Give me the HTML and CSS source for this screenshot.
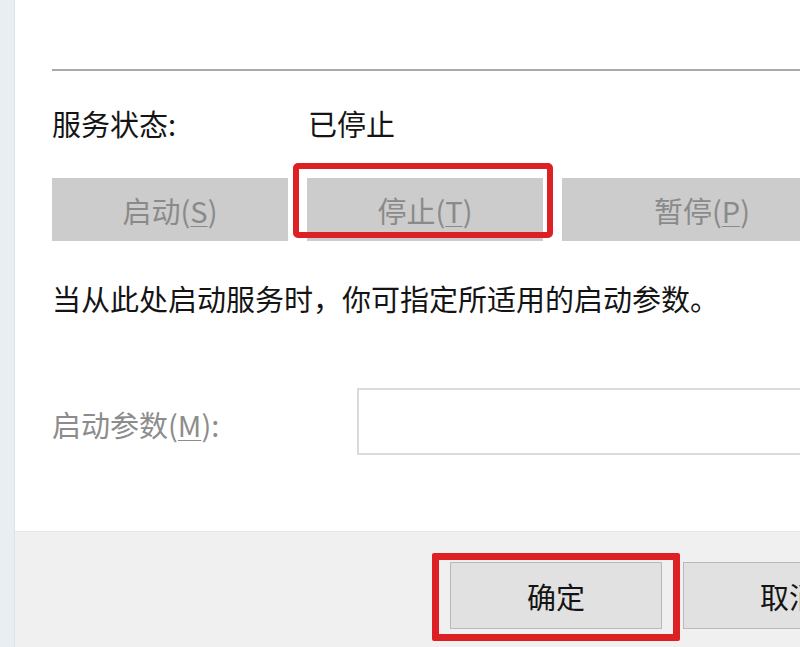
FILE: index.html
```html
<!DOCTYPE html>
<html lang="zh-CN">
<head>
<meta charset="utf-8">
<title>服务属性</title>
<link rel="stylesheet" href="styles.css">
</head>
<body>
<div class="frame">
  <div class="panel">
    <div class="separator"></div>
    <div class="status-row">
      <span class="status-label">服务状态:</span>
      <span class="status-value">已停止</span>
    </div>
    <div class="btn-row">
      <div class="svc-btn">启动(<u>S</u>)</div>
      <div class="svc-btn highlighted">停止(<u>T</u>)<span class="mark mark-stop"></span></div>
      <div class="svc-btn wide">暂停(<u>P</u>)</div>
    </div>
    <div class="desc">当从此处启动服务时，你可指定所适用的启动参数。</div>
    <div class="param-row">
      <span class="param-label">启动参数(<u>M</u>):</span>
      <div class="param-input"></div>
    </div>
  </div>
  <div class="footer">
    <div class="dlg-btn highlighted">确定<span class="mark mark-ok"></span></div>
    <div class="dlg-btn">取消</div>
  </div>
</div>
</body>
</html>
```
FILE: styles.css
```css
html, body {
  margin: 0;
  padding: 0;
  width: 800px;
  height: 647px;
  overflow: hidden;
}
body {
  background: #e8eef2;
  font-family: "Noto Sans CJK SC", "Noto Sans", sans-serif;
  font-size: 29px;
  color: #141414;
  display: flex;
}
.frame {
  margin-left: 14px;
  border-left: 1px solid #dde3e7;
  width: 900px;
  flex: none;
  display: flex;
  flex-direction: column;
  background: #f0f0f0;
}
.panel {
  height: 532px;
  background: #ffffff;
  border-bottom: 1px solid #e6e6e6;
  padding-left: 37px;
  display: flex;
  flex-direction: column;
  box-sizing: border-box;
}
.separator {
  margin-top: 69px;
  height: 2px;
  background: #aaaaaa;
}
.status-row {
  margin-top: 32px;
  height: 40px;
  line-height: 40px;
  display: flex;
}
.status-label {
  width: 256px;
  flex: none;
}
.btn-row {
  margin-top: 35px;
  display: flex;
  gap: 19px;
}
.svc-btn {
  position: relative;
  width: 236px;
  height: 63px;
  flex: none;
  background: #cccccc;
  color: #8a8a8a;
  display: flex;
  align-items: center;
  justify-content: center;
}
.svc-btn.wide {
  width: 280px;
}
.svc-btn u, .param-label u {
  text-underline-offset: 3px;
  text-decoration-thickness: 1px;
}
.mark {
  position: absolute;
  border: 6px solid #dc2024;
  border-radius: 5px;
  box-sizing: border-box;
  pointer-events: none;
}
.mark-stop {
  left: -14px;
  top: -15px;
  width: 260px;
  height: 75px;
}
.desc {
  margin-top: 37px;
  height: 40px;
  line-height: 40px;
  white-space: nowrap;
}
.param-row {
  margin-top: 70px;
  display: flex;
  align-items: flex-start;
}
.param-label {
  width: 305px;
  flex: none;
  margin-top: 16px;
  line-height: 40px;
  color: #8c8c8c;
}
.param-input {
  width: 500px;
  height: 67px;
  box-sizing: border-box;
  border: 2px solid #dadada;
  background: #ffffff;
}
.footer {
  flex: 1;
  padding-top: 30px;
  padding-left: 435px;
  display: flex;
  align-items: flex-start;
  gap: 21px;
}
.dlg-btn {
  position: relative;
  width: 212px;
  height: 67px;
  flex: none;
  box-sizing: border-box;
  background: #e1e1e1;
  border: 1px solid #b9b9b9;
  display: flex;
  align-items: center;
  justify-content: center;
  color: #141414;
}
.mark-ok {
  left: -19px;
  top: -10px;
  width: 248px;
  height: 88px;
  border-width: 7px;
  border-radius: 2px;
}
```
